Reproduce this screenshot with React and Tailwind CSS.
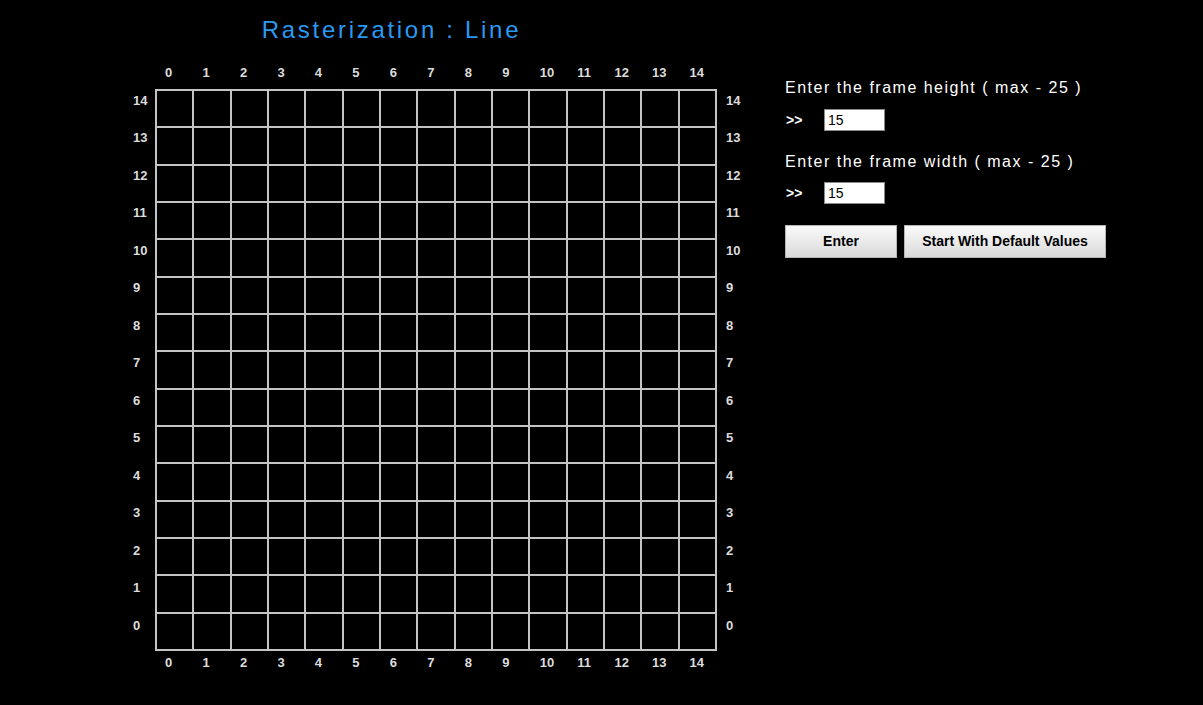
const N = 15;
const idx = Array.from({ length: N }, (_, i) => i);

function ColLabels({ className }) {
  return (
    <div className={"grid grid-cols-15 w-[562px] h-[16px] " + className}>
      {idx.map((i) => (
        <span key={i} className="pl-[10px] text-[13px] leading-[16px] font-bold text-[#dcdcdc]">
          {i}
        </span>
      ))}
    </div>
  );
}

function RowLabels({ className }) {
  return (
    <div className={"flex flex-col " + className}>
      {idx.map((i) => (
        <span key={i} className="h-[37.47px] pt-[4px] text-[13px] leading-[16px] font-bold text-[#dcdcdc]">
          {N - 1 - i}
        </span>
      ))}
    </div>
  );
}

export default function App() {
  return (
    <div className="min-h-screen h-[705px] bg-black flex font-['Liberation_Sans',Arial,sans-serif] overflow-hidden">
      {/* left column: title + frame */}
      <div className="w-[783px] flex flex-col pt-[16px]">
        <h1 className="text-center text-[24px] leading-[28px] tracking-[2.7px] text-[#2a9af0] font-normal">
          Rasterization : Line
        </h1>

        <div className="ml-[133px] mt-[21px]">
          <ColLabels className="ml-[22px]" />
          <div className="flex mt-[8px]">
            <RowLabels className="w-[22px]" />
            <div className="grid grid-cols-15 grid-rows-15 gap-[2px] p-[2px] w-[562px] h-[562px] bg-[#c4c4c4]">
              {Array.from({ length: N * N }, (_, k) => (
                <div key={k} className="bg-black" />
              ))}
            </div>
            <RowLabels className="pl-[9px]" />
          </div>
          <ColLabels className="ml-[22px] mt-[4px]" />
        </div>
      </div>

      {/* right column: inputs */}
      <div className="flex flex-col pt-[78px] ml-[2px] text-white">
        <p className="text-[16px] leading-[20px] tracking-[1.5px]">Enter the frame height ( max - 25 )</p>
        <div className="flex items-center mt-[11px]">
          <span className="w-[39px] pl-[1px] text-[14px] font-bold">&gt;&gt;</span>
          <input
            defaultValue="15"
            className="w-[61px] h-[22px] bg-white text-black text-[14px] px-[3px] border border-[#8a8a8a] outline-none"
          />
        </div>
        <p className="mt-[21px] text-[16px] leading-[20px] tracking-[1.5px]">Enter the frame width ( max - 25 )</p>
        <div className="flex items-center mt-[10px]">
          <span className="w-[39px] pl-[1px] text-[14px] font-bold">&gt;&gt;</span>
          <input
            defaultValue="15"
            className="w-[61px] h-[22px] bg-white text-black text-[14px] px-[3px] border border-[#8a8a8a] outline-none"
          />
        </div>
        <div className="flex gap-[7px] mt-[21px]">
          <button className="w-[112px] h-[33px] text-[14px] font-bold text-black bg-gradient-to-b from-[#fafafa] to-[#dadada] border border-[#b5b5b5]">
            Enter
          </button>
          <button className="w-[202px] h-[33px] text-[14px] font-bold text-black bg-gradient-to-b from-[#fafafa] to-[#dadada] border border-[#b5b5b5]">
            Start With Default Values
          </button>
        </div>
      </div>
    </div>
  );
}
